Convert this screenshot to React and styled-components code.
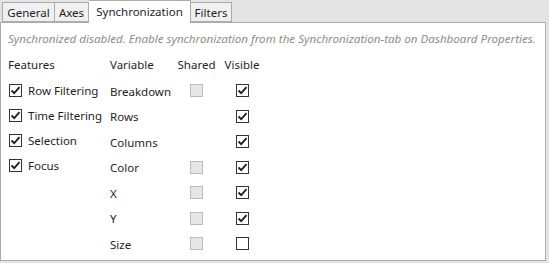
import styled, { createGlobalStyle } from "styled-components";

const GlobalStyle = createGlobalStyle`
  html, body {
    margin: 0;
    padding: 0;
    background: #e3e3e3;
  }
  body {
    font-family: "Noto Sans", "Open Sans", sans-serif;
    font-size: 11.5px;
    color: #1e1e1e;
  }
`;

const tabs = [
  { label: "General", width: 53 },
  { label: "Axes", width: 34 },
  { label: "Synchronization", width: 102, active: true },
  { label: "Filters", width: 41 },
];

const features = ["Row Filtering", "Time Filtering", "Selection", "Focus"];

const variables = [
  { name: "Breakdown", shared: true, visible: true },
  { name: "Rows", shared: false, visible: true },
  { name: "Columns", shared: false, visible: true },
  { name: "Color", shared: true, visible: true },
  { name: "X", shared: true, visible: true },
  { name: "Y", shared: true, visible: true },
  { name: "Size", shared: true, visible: false },
];

function Check({ checked, disabled }) {
  return (
    <Box disabled={disabled}>
      {checked && (
        <svg width="11" height="11" viewBox="0 0 11 11">
          <path d="M1.5 5.5 L4.2 8.2 L9.5 2.2" fill="none" stroke="#1e1e1e" strokeWidth="1.8" />
        </svg>
      )}
    </Box>
  );
}

export default function App() {
  return (
    <>
      <GlobalStyle />
      <Window>
        <TabBar>
          {tabs.map((t) => (
            <Tab key={t.label} active={t.active} $w={t.width}>
              {t.label}
            </Tab>
          ))}
        </TabBar>
        <Panel>
          <Hint>Synchronized disabled. Enable synchronization from the Synchronization-tab on Dashboard Properties.</Hint>
          <Columns>
            <Features>
              <Header>Features</Header>
              {features.map((f) => (
                <FeatureRow key={f}>
                  <Check checked />
                  <span>{f}</span>
                </FeatureRow>
              ))}
            </Features>
            <VarTable>
              <Header>Variable</Header>
              <HeaderCell>Shared</HeaderCell>
              <HeaderCell>Visible</HeaderCell>
              {variables.map((v) => (
                <VarRow key={v.name}>
                  <VarName>{v.name}</VarName>
                  <Cell>{v.shared && <Check disabled />}</Cell>
                  <Cell>
                    <Check checked={v.visible} />
                  </Cell>
                </VarRow>
              ))}
            </VarTable>
          </Columns>
        </Panel>
      </Window>
    </>
  );
}

const Window = styled.div`
  width: 546px;
  height: 261px;
  display: flex;
  flex-direction: column;
`;

const TabBar = styled.div`
  display: flex;
  align-items: flex-end;
  height: 22px;
  padding-left: 2px;
  position: relative;
  z-index: 1;
`;

const Tab = styled.div`
  box-sizing: border-box;
  width: ${(p) => p.$w}px;
  height: ${(p) => (p.active ? "23px" : "20px")};
  margin-bottom: ${(p) => (p.active ? "-1px" : "0")};
  display: flex;
  align-items: center;
  justify-content: center;
  padding-bottom: ${(p) => (p.active ? "2px" : "0")};
  background: ${(p) => (p.active ? "#ffffff" : "#f0f0f0")};
  border: 1px solid #acacac;
  border-bottom: ${(p) => (p.active ? "none" : "1px solid #acacac")};
  & + & {
    border-left: ${(p) => (p.active ? "1px solid #acacac" : "none")};
  }
  position: relative;
  z-index: ${(p) => (p.active ? 2 : 1)};
  color: #1e1e1e;
  white-space: nowrap;
`;

const Panel = styled.div`
  flex: 1;
  background: #ffffff;
  border: 1px solid #acacac;
  padding: 8px 7px 0 7px;
`;

const Hint = styled.div`
  font-style: italic;
  font-size: 11.6px;
  color: #8c8c8c;
  height: 16px;
  line-height: 16px;
  white-space: nowrap;
`;

const Columns = styled.div`
  display: flex;
  margin-top: 9px;
`;

const Features = styled.div`
  width: 102px;
  display: flex;
  flex-direction: column;
`;

const Header = styled.div`
  height: 18px;
  line-height: 18px;
  color: #1e1e1e;
`;

const HeaderCell = styled(Header)`
  text-align: center;
`;

const FeatureRow = styled.div`
  height: 25px;
  display: flex;
  align-items: center;
  gap: 6px;
  padding-left: 1px;
  white-space: nowrap;
  &:nth-child(2) {
    margin-top: 4px;
  }
`;

const VarTable = styled.div`
  display: grid;
  grid-template-columns: 64px 45px 46px;
  grid-template-rows: 22px;
  grid-auto-rows: 25.5px;
  align-content: start;
`;

const VarRow = styled.div`
  display: contents;
`;

const VarName = styled.div`
  display: flex;
  align-items: center;
  padding-top: 1px;
  box-sizing: border-box;
`;

const Cell = styled.div`
  display: flex;
  align-items: center;
  justify-content: center;
`;

const Box = styled.div`
  box-sizing: border-box;
  width: 13px;
  height: 13px;
  flex: none;
  border: 1px solid ${(p) => (p.disabled ? "#bcbcbc" : "#333333")};
  background: ${(p) => (p.disabled ? "#e6e6e6" : "#ffffff")};
  display: flex;
  align-items: center;
  justify-content: center;
`;
